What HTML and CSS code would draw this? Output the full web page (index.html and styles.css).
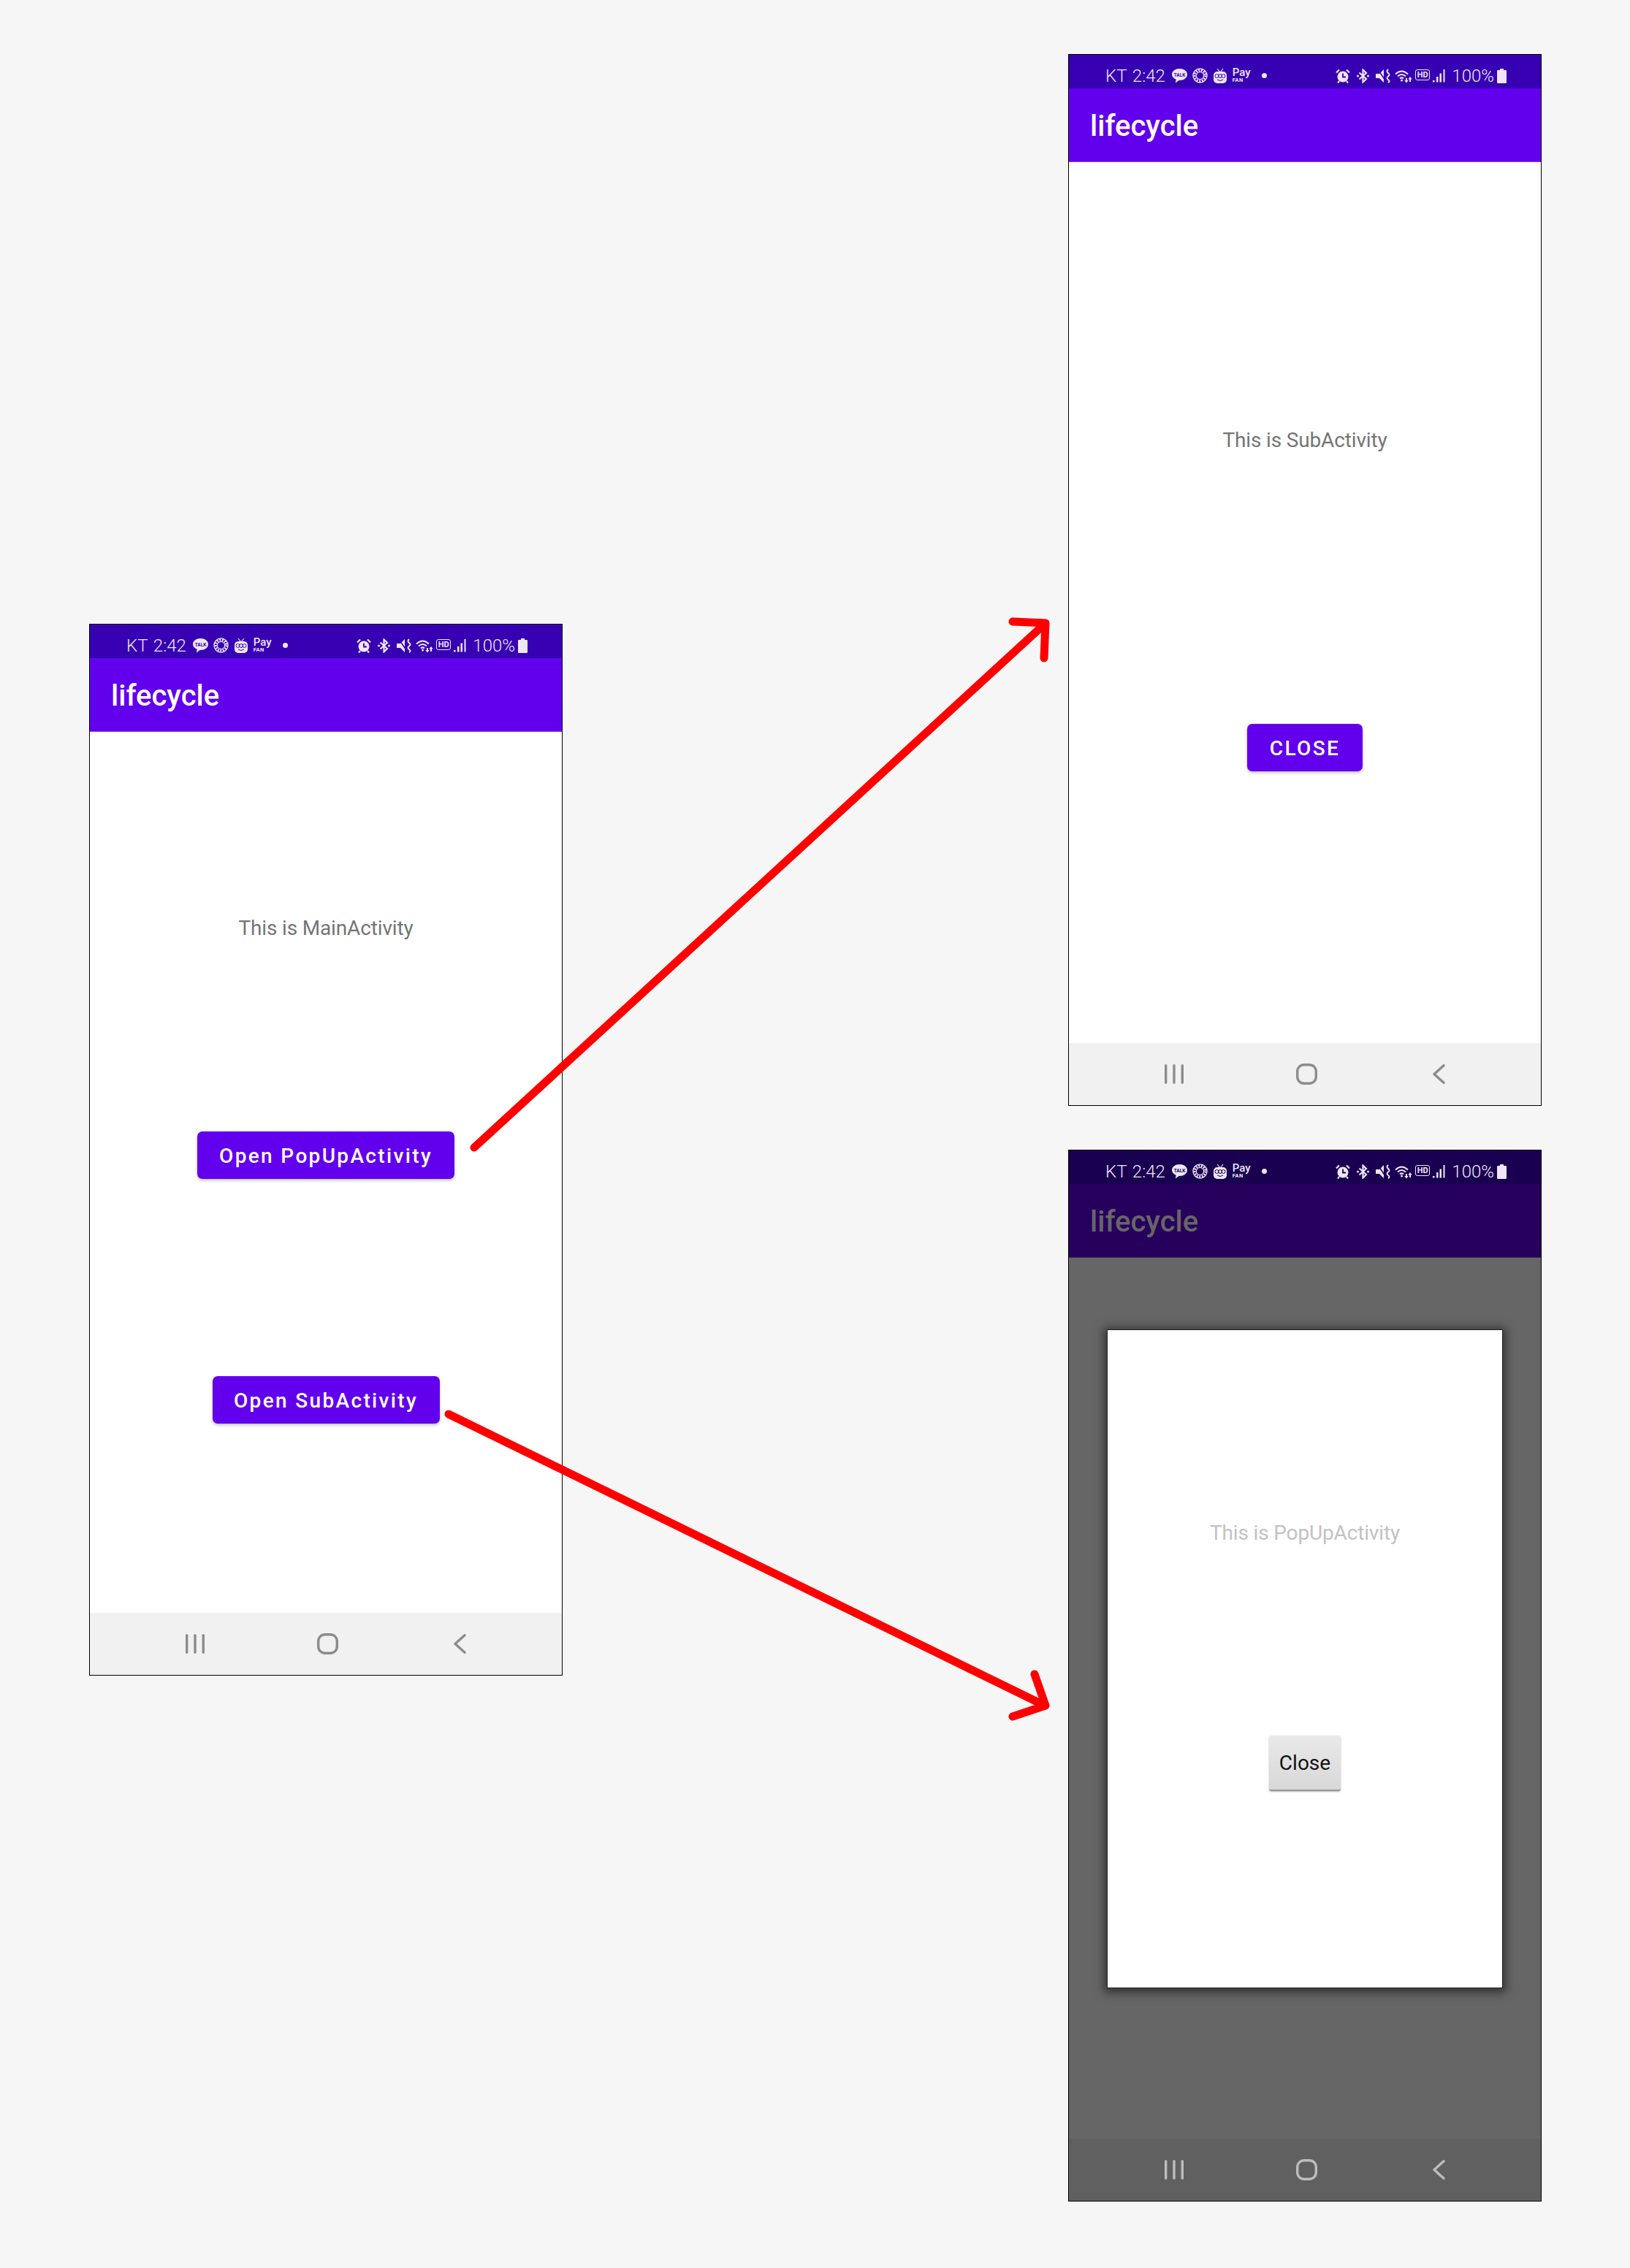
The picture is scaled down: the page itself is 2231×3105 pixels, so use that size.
FILE: index.html
```html
<!DOCTYPE html>
<html lang="en">
<head>
  <meta charset="UTF-8">
  <meta name="viewport" content="width=device-width, initial-scale=1.0">
  <title>lifecycle</title>
  <link rel="stylesheet" href="styles.css">
</head>
<body>
  <svg class="defs" width="0" height="0">
    <defs>
      <symbol id="i-gem" viewBox="0 0 21 21">
        <circle cx="10.5" cy="10.5" r="9.6" fill="none" stroke="currentColor" stroke-width="1.3"/>
        <circle cx="10.5" cy="10.5" r="7.4" fill="none" stroke="currentColor" stroke-width="3" stroke-dasharray="2 1.6"/>
        <circle cx="10.5" cy="10.5" r="5.2" fill="none" stroke="currentColor" stroke-width="1.2"/>
      </symbol>
      <symbol id="i-bluetooth" viewBox="0 0 17 20">
        <path d="M3.5 5.5 13 14 8.5 18.5V1.5L13 6 3.5 14.5" fill="none" stroke="currentColor" stroke-width="2.2"/>
        <circle cx="1.5" cy="10" r="1.5" fill="currentColor"/>
        <circle cx="15.5" cy="10" r="1.5" fill="currentColor"/>
      </symbol>
      <symbol id="i-mute" viewBox="0 0 20 20">
        <path d="M0 7h5l6-6v18l-6-6H0z" fill="currentColor"/>
        <path class="mute-cut" d="M3 1l10 15"/>
        <path d="M17 1q-3 2.500 0 5t0 4.500 0 4.500 0 4" fill="none" stroke="currentColor" stroke-width="2"/>
      </symbol>
      <symbol id="i-wifi" viewBox="0 0 25 20">
        <g fill="none" stroke="currentColor" stroke-width="2">
          <path d="M1 7.500q8.500-8 17 0"/>
          <path d="M4 10.500q5.500-5 11 0"/>
          <path d="M7 13.500q2.500-2.200 5 0"/>
        </g>
        <circle cx="9.500" cy="16" r="1.500" fill="currentColor"/>
        <path d="M15 13h2v3h1.700L16 19.500 13.300 16H15zM21 11l2.700 3.500H22V18h-2v-3.500h-1.700z" fill="currentColor"/>
      </symbol>
      <symbol id="i-signal" viewBox="0 0 17 18">
        <path d="M0 15h2.500v2.500H0zM5 10h2.500v7.500H5zM9.500 5.500H12v12H9.500zM14.500 0H16.500v17.500H14.500z" fill="currentColor"/>
      </symbol>
      <symbol id="i-battery" viewBox="0 0 13 20">
        <path d="M4 0h5v2h3a1 1 0 0 1 1 1v16a1 1 0 0 1-1 1H1a1 1 0 0 1-1-1V3a1 1 0 0 1 1-1h3z" fill="currentColor"/>
      </symbol>
      <symbol id="i-menu" viewBox="0 0 26 27">
        <path d="M1.700 1.700v23.600M13 1.700v23.600M24.300 1.700v23.600" fill="none" stroke="currentColor" stroke-width="3.400" stroke-linecap="round"/>
      </symbol>
      <symbol id="i-home" viewBox="0 0 29 29">
        <rect x="1.700" y="1.700" width="25.600" height="25.600" rx="9" fill="none" stroke="currentColor" stroke-width="3.400"/>
      </symbol>
      <symbol id="i-back" viewBox="0 0 17 27">
        <path d="M15 1.700 2 13.500l13 11.800" fill="none" stroke="currentColor" stroke-width="3.400" stroke-linecap="round" stroke-linejoin="round"/>
      </symbol>
    </defs>
  </svg>

  <div class="page">
    <div class="col-left">
      <div class="phone">
        <div class="status">
          <div class="status-left">
            <span class="status-text">KT 2:42</span>
            <svg class="talk" width="21" height="20" viewBox="0 0 21 20"><path d="M10.500 0C16.300 0 21 3.500 21 8s-4.700 8-10.500 8h-1L5 19.500l.6-4.800C2.200 13.300 0 10.900 0 8 0 3.500 4.700 0 10.500 0z" fill="currentColor"/><text class="talk-label" x="10.500" y="10.500" text-anchor="middle">TALK</text></svg>
            <svg class="ic-gem" width="21" height="21"><use href="#i-gem"/></svg>
            <svg class="tv" width="18" height="21" viewBox="0 0 18 21"><path d="M5 1l4 5 4-5" fill="none" stroke="currentColor" stroke-width="1.200"/><rect y="5" width="18" height="16" rx="5" fill="currentColor"/><g class="tv-face"><circle cx="4.500" cy="11" r="2.500"/><circle cx="9" cy="11" r="2.500"/><circle cx="13.500" cy="11" r="2.500"/><path d="M5 16q4 3 8 0"/></g></svg>
            <div class="pay"><span class="pay-top">Pay</span><span class="pay-sub">FAN</span></div>
            <span class="status-dot"></span>
          </div>
          <div class="status-right">
            <svg class="alarm" width="20" height="20" viewBox="0 0 20 20"><path d="M1 5.500 5 1.500M19 5.500l-4-4M5 17l-2 2.500M15 17l2 2.500" stroke="currentColor" stroke-width="2.200" fill="none"/><circle cx="10" cy="11" r="7.500" fill="currentColor"/><path class="alarm-hand" d="M10 6.500V11.500H14"/></svg>
            <svg class="ic-bt" width="17" height="20"><use href="#i-bluetooth"/></svg>
            <svg class="ic-mute" width="20" height="20"><use href="#i-mute"/></svg>
            <svg class="ic-wifi" width="25" height="20"><use href="#i-wifi"/></svg>
            <div class="hd"><span class="hd-text">HD</span></div>
            <svg class="ic-signal" width="17" height="18"><use href="#i-signal"/></svg>
            <span class="status-text batt-text">100%</span>
            <svg class="ic-batt" width="13" height="20"><use href="#i-battery"/></svg>
          </div>
        </div>
        <div class="appbar">lifecycle</div>
        <div class="content content-main">
          <p class="label">This is MainActivity</p>
          <button class="btn btn-popup">Open PopUpActivity</button>
          <button class="btn btn-sub">Open SubActivity</button>
        </div>
        <div class="navbar">
          <svg class="nav-menu" width="26" height="27"><use href="#i-menu"/></svg>
          <svg class="nav-home" width="29" height="29"><use href="#i-home"/></svg>
          <svg class="nav-back" width="17" height="27"><use href="#i-back"/></svg>
        </div>
      </div>
    </div>

    <div class="col-right">
      <div class="phone">
        <div class="status">
          <div class="status-left">
            <span class="status-text">KT 2:42</span>
            <svg class="talk" width="21" height="20" viewBox="0 0 21 20"><path d="M10.500 0C16.300 0 21 3.500 21 8s-4.700 8-10.500 8h-1L5 19.500l.6-4.800C2.200 13.300 0 10.900 0 8 0 3.500 4.700 0 10.500 0z" fill="currentColor"/><text class="talk-label" x="10.500" y="10.500" text-anchor="middle">TALK</text></svg>
            <svg class="ic-gem" width="21" height="21"><use href="#i-gem"/></svg>
            <svg class="tv" width="18" height="21" viewBox="0 0 18 21"><path d="M5 1l4 5 4-5" fill="none" stroke="currentColor" stroke-width="1.200"/><rect y="5" width="18" height="16" rx="5" fill="currentColor"/><g class="tv-face"><circle cx="4.500" cy="11" r="2.500"/><circle cx="9" cy="11" r="2.500"/><circle cx="13.500" cy="11" r="2.500"/><path d="M5 16q4 3 8 0"/></g></svg>
            <div class="pay"><span class="pay-top">Pay</span><span class="pay-sub">FAN</span></div>
            <span class="status-dot"></span>
          </div>
          <div class="status-right">
            <svg class="alarm" width="20" height="20" viewBox="0 0 20 20"><path d="M1 5.500 5 1.500M19 5.500l-4-4M5 17l-2 2.500M15 17l2 2.500" stroke="currentColor" stroke-width="2.200" fill="none"/><circle cx="10" cy="11" r="7.500" fill="currentColor"/><path class="alarm-hand" d="M10 6.500V11.500H14"/></svg>
            <svg class="ic-bt" width="17" height="20"><use href="#i-bluetooth"/></svg>
            <svg class="ic-mute" width="20" height="20"><use href="#i-mute"/></svg>
            <svg class="ic-wifi" width="25" height="20"><use href="#i-wifi"/></svg>
            <div class="hd"><span class="hd-text">HD</span></div>
            <svg class="ic-signal" width="17" height="18"><use href="#i-signal"/></svg>
            <span class="status-text batt-text">100%</span>
            <svg class="ic-batt" width="13" height="20"><use href="#i-battery"/></svg>
          </div>
        </div>
        <div class="appbar">lifecycle</div>
        <div class="content content-sub">
          <p class="label">This is SubActivity</p>
          <button class="btn btn-close">CLOSE</button>
        </div>
        <div class="navbar">
          <svg class="nav-menu" width="26" height="27"><use href="#i-menu"/></svg>
          <svg class="nav-home" width="29" height="29"><use href="#i-home"/></svg>
          <svg class="nav-back" width="17" height="27"><use href="#i-back"/></svg>
        </div>
      </div>

      <div class="phone phone-dim">
        <div class="status">
          <div class="status-left">
            <span class="status-text">KT 2:42</span>
            <svg class="talk" width="21" height="20" viewBox="0 0 21 20"><path d="M10.500 0C16.300 0 21 3.500 21 8s-4.700 8-10.500 8h-1L5 19.500l.6-4.800C2.200 13.300 0 10.900 0 8 0 3.500 4.700 0 10.500 0z" fill="currentColor"/><text class="talk-label" x="10.500" y="10.500" text-anchor="middle">TALK</text></svg>
            <svg class="ic-gem" width="21" height="21"><use href="#i-gem"/></svg>
            <svg class="tv" width="18" height="21" viewBox="0 0 18 21"><path d="M5 1l4 5 4-5" fill="none" stroke="currentColor" stroke-width="1.200"/><rect y="5" width="18" height="16" rx="5" fill="currentColor"/><g class="tv-face"><circle cx="4.500" cy="11" r="2.500"/><circle cx="9" cy="11" r="2.500"/><circle cx="13.500" cy="11" r="2.500"/><path d="M5 16q4 3 8 0"/></g></svg>
            <div class="pay"><span class="pay-top">Pay</span><span class="pay-sub">FAN</span></div>
            <span class="status-dot"></span>
          </div>
          <div class="status-right">
            <svg class="alarm" width="20" height="20" viewBox="0 0 20 20"><path d="M1 5.500 5 1.500M19 5.500l-4-4M5 17l-2 2.500M15 17l2 2.500" stroke="currentColor" stroke-width="2.200" fill="none"/><circle cx="10" cy="11" r="7.500" fill="currentColor"/><path class="alarm-hand" d="M10 6.500V11.500H14"/></svg>
            <svg class="ic-bt" width="17" height="20"><use href="#i-bluetooth"/></svg>
            <svg class="ic-mute" width="20" height="20"><use href="#i-mute"/></svg>
            <svg class="ic-wifi" width="25" height="20"><use href="#i-wifi"/></svg>
            <div class="hd"><span class="hd-text">HD</span></div>
            <svg class="ic-signal" width="17" height="18"><use href="#i-signal"/></svg>
            <span class="status-text batt-text">100%</span>
            <svg class="ic-batt" width="13" height="20"><use href="#i-battery"/></svg>
          </div>
        </div>
        <div class="appbar">lifecycle</div>
        <div class="content content-dim">
          <div class="dialog">
            <p class="label label-light">This is PopUpActivity</p>
            <button class="btn-plain">Close</button>
          </div>
        </div>
        <div class="navbar">
          <svg class="nav-menu" width="26" height="27"><use href="#i-menu"/></svg>
          <svg class="nav-home" width="29" height="29"><use href="#i-home"/></svg>
          <svg class="nav-back" width="17" height="27"><use href="#i-back"/></svg>
        </div>
      </div>
    </div>

    <!-- arrows lie over the phones -->
    <svg class="arrows" width="2231" height="3105" viewBox="0 0 2231 3105">
      <g fill="none" stroke="#ff0000" stroke-width="11" stroke-linecap="round" stroke-linejoin="round">
        <path d="M649 1571 1429 855"/>
        <path d="M1386 851 1431 853 1429 901"/>
        <path d="M614 1936 1428 2334"/>
        <path d="M1416 2292 1431 2335 1386 2350"/>
      </g>
    </svg>
  </div>
</body>
</html>
```

FILE: styles.css
```css
* { margin: 0; padding: 0; box-sizing: border-box; }
body {
  background-color: #f6f6f6;
  font-family: Roboto, "Liberation Sans", sans-serif;
}
.defs { position: absolute; }
.page {
  position: relative;
  display: flex;
  width: 2231px; height: 3105px;
  padding-left: 122px;
  overflow: hidden;
}
.col-left { padding-top: 854px; }
.col-right {
  display: flex;
  flex-direction: column;
  gap: 60px;
  margin-left: 692px;
  padding-top: 74px;
}
.arrows { position: absolute; left: 0; top: 0; pointer-events: none; }

/* phone frame */
.phone {
  --bar: #3700b3;
  display: flex;
  flex-direction: column;
  width: 648px; height: 1440px;
  border: 1px solid #000;
  background-color: #fff;
}
.phone-dim { --bar: #1a0050; }

/* status bar */
.status {
  display: flex;
  justify-content: space-between;
  align-items: center;
  height: 46px;
  padding: 11px 47px 0 50px;
  background-color: var(--bar);
  color: #eee6fa;
}
.status-left, .status-right { display: flex; align-items: center; }
.status-text { font-size: 24px; font-weight: 300; line-height: 24px; white-space: nowrap; word-spacing: 2px; }
.talk { margin-left: 9px; }
.talk-label { font-size: 6.500px; font-weight: 700; fill: var(--bar); }
.ic-gem { margin-left: 7px; }
.tv { margin-left: 8px; }
.tv-face { fill: none; stroke: var(--bar); stroke-width: 1; }
.pay { display: flex; flex-direction: column; margin-left: 8px; width: 22px; }
.pay-top { font-size: 15px; font-weight: 500; line-height: 13px; }
.pay-sub { font-size: 7.500px; font-weight: 700; line-height: 8px; letter-spacing: .3px; }
.status-dot {
  width: 7px; height: 7px;
  margin-left: 18px;
  border-radius: 50%;
  background-color: currentColor;
}
.alarm-hand { fill: none; stroke: var(--bar); stroke-width: 1.800; }
.ic-bt { margin-left: 9px; }
.ic-mute { margin-left: 9px; }
.mute-cut { fill: none; stroke: var(--bar); stroke-width: 1.500; }
.ic-wifi { margin-left: 6px; }
.hd {
  display: flex;
  justify-content: center;
  align-items: center;
  width: 20px; height: 15px;
  margin-left: 3px; margin-bottom: 2px;
  border: 1.500px solid currentColor;
  border-radius: 3px;
}
.hd-text { font-size: 11px; font-weight: 700; line-height: 11px; }
.ic-signal { margin-left: 4px; }
.batt-text { margin-left: 9px; }
.ic-batt { margin-left: 4px; }

/* app bar */
.appbar {
  height: 101px;
  padding-left: 29px;
  background-color: #6200ee;
  border-bottom: 1px solid #8a45f0;
  color: #fff;
  font-size: 40px;
  font-weight: 500;
  line-height: 104px;
}
.phone-dim .appbar {
  background-color: #27005d;
  border-bottom-color: #3b2a5c;
  color: #666;
}

/* content */
.content {
  flex: 1;
  display: flex;
  flex-direction: column;
  align-items: center;
}
.content-main { padding-top: 249px; }
.content-sub { padding-top: 361px; }
.content-dim { padding-top: 98px; background-color: #666; }
.label {
  color: #757575;
  font-size: 28px;
  letter-spacing: -.15px;
  line-height: 40px;
}
.label-light { color: #c2c2c2; }
.btn {
  height: 65px;
  padding-top: 1px;
  border: none;
  border-radius: 7px;
  background-color: #6200ee;
  box-shadow: 0 2px 4px rgba(0, 0, 0, .25);
  color: #fff;
  font-family: inherit;
  font-size: 28px;
  font-weight: 500;
  letter-spacing: 2.350px;
}
.btn-popup { width: 352px; margin-top: 258px; }
.btn-sub { width: 311px; margin-top: 270px; }
.btn-close { width: 158px; margin-top: 368px; }

/* popup */
.dialog {
  display: flex;
  flex-direction: column;
  align-items: center;
  width: 542px; height: 902px;
  padding-top: 258px;
  border: 1px solid #222;
  background-color: #fff;
  box-shadow: 0 2px 12px 4px rgba(0, 0, 0, .5);
}
.btn-plain {
  width: 98px; height: 76px;
  margin-top: 257px;
  border: none;
  border-bottom: 2px solid #999;
  border-radius: 3px;
  background: linear-gradient(#e9e9e9, #d8d8d8);
  box-shadow: 0 1px 2px rgba(0, 0, 0, .3);
  color: #111;
  font-family: inherit;
  font-size: 28px;
}

/* nav bar */
.navbar {
  display: flex;
  align-items: center;
  height: 85px;
  padding: 0 0 1px 131px;
  background-color: #f1f1f1;
  color: #8c8c8c;
}
.nav-home { margin-left: 154px; }
.nav-back { margin-left: 158px; }
.phone-dim .navbar { background-color: #606060; color: #bdbdbd; }
```
